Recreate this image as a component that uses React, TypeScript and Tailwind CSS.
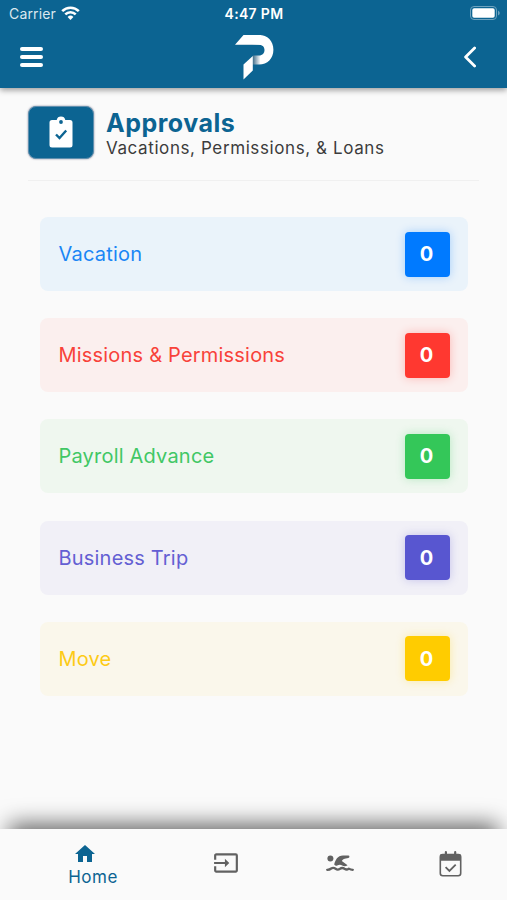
import { MdHome, MdInput } from "react-icons/md";

interface ApprovalItem {
  label: string;
  count: number;
  card: string;
  badge: string;
}

const items: ApprovalItem[] = [
  {
    label: "Vacation",
    count: 0,
    card: "bg-[#eaf3fa] text-[#1a86f5]",
    badge: "bg-[#007aff] shadow-[0_0_10px_rgba(0,122,255,0.3)]",
  },
  {
    label: "Missions & Permissions",
    count: 0,
    card: "bg-[#fbefee] text-[#f8423a]",
    badge: "bg-[#ff3830] shadow-[0_0_10px_rgba(255,56,48,0.3)]",
  },
  {
    label: "Payroll Advance",
    count: 0,
    card: "bg-[#eff7ef] text-[#41c765]",
    badge: "bg-[#34c759] shadow-[0_0_10px_rgba(52,199,89,0.3)]",
  },
  {
    label: "Business Trip",
    count: 0,
    card: "bg-[#f1f0f7] text-[#645fd3]",
    badge: "bg-[#5856d0] shadow-[0_0_10px_rgba(88,86,208,0.3)]",
  },
  {
    label: "Move",
    count: 0,
    card: "bg-[#faf7eb] text-[#fdcb16]",
    badge: "bg-[#ffcc00] shadow-[0_0_10px_rgba(255,204,0,0.3)]",
  },
];

export default function App() {
  return (
    <div className="flex h-[900px] w-[507px] flex-col overflow-hidden bg-[#fafafa] font-['Inter','Liberation_Sans',sans-serif]">
      <Header />

      <main className="flex-1 px-7">
        {/* Page title */}
        <div className="flex h-[93px] items-start border-b border-[#f0f0f0] pt-[18px]">
          <div className="flex h-[53px] w-[66px] items-center justify-center rounded-lg border border-[#5f8fae] bg-[#0c6492] pb-0.5 shadow-[0_0_2px_rgba(40,50,90,0.6)]">
            <ClipboardIcon />
          </div>
          <div className="ml-3 pt-[2px]">
            <h1 className="text-[25px] leading-[30px] font-bold tracking-[0.5px] text-[#0c6492]">
              Approvals
            </h1>
            <p className="text-[17px] leading-[20px] tracking-[0.6px] whitespace-nowrap text-[#3c3c3c]">
              Vacations, Permissions, &amp; Loans
            </p>
          </div>
        </div>

        {/* Approval types */}
        <div className="mt-9 flex flex-col gap-[27.2px] pr-[11px] pl-3">
          {items.map((item) => (
            <ApprovalCard key={item.label} item={item} />
          ))}
        </div>
      </main>

      <BottomNav />
    </div>
  );
}

function Header() {
  return (
    <header className="relative z-10 h-[88px] bg-[#0c6492] text-white shadow-[0_2px_6px_rgba(0,0,0,0.4)]">
      {/* Status bar */}
      <div className="grid h-[26px] grid-cols-3 items-center pr-[7px] pl-[9px]">
        <div className="flex items-center gap-[5px] text-[14px] tracking-[0.15px] text-[#dbe8ef]">
          Carrier
          <WifiIcon />
        </div>
        <div className="pr-px text-center text-[14px] font-semibold tracking-[0.3px]">4:47 PM</div>
        <div className="flex justify-end">
          <BatteryIcon />
        </div>
      </div>

      {/* App bar */}
      <div className="grid h-[62px] grid-cols-3 items-center pr-[31px] pl-5">
        <button className="flex w-[23px] flex-col gap-1">
          <span className="h-1 rounded-full bg-white" />
          <span className="h-1 rounded-full bg-white" />
          <span className="h-1 rounded-full bg-white" />
        </button>
        <div className="flex justify-center pl-3">
          <Logo />
        </div>
        <button className="flex justify-end">
          <svg width="13" height="22" viewBox="0 0 13 22" fill="none">
            <path d="M11.6 2L2.6 11L11.6 20" stroke="white" strokeWidth="2.8" strokeLinecap="round" strokeLinejoin="round" />
          </svg>
        </button>
      </div>
    </header>
  );
}

function ApprovalCard({ item }: { item: ApprovalItem }) {
  return (
    <div className={`flex h-[74px] items-center justify-between rounded-lg pr-[18px] pl-[18.5px] ${item.card}`}>
      <span className="text-[20px] tracking-[0.2px]">{item.label}</span>
      <span className={`flex h-[45px] w-[45px] items-center justify-center rounded pr-0.5 text-[20px] font-bold text-white ${item.badge}`}>
        {item.count}
      </span>
    </div>
  );
}

function BottomNav() {
  return (
    <nav className="flex h-[71px] items-center bg-[#fafafa] text-[#616161] shadow-[0_-14px_22px_-9px_rgba(0,0,0,0.6)]">
      <button className="flex w-[186px] flex-col items-center text-[#0c6492]">
        <MdHome size={24} className="mr-4" />
        <span className="text-[17px] leading-[22px] tracking-[0.5px]">Home</span>
      </button>
      <button className="flex w-[80px] justify-center pb-[3px]">
        <MdInput size={26} />
      </button>
      <button className="flex w-[148px] justify-center pb-[3px]">
        <SwimmerIcon />
      </button>
      <button className="flex w-[72px] justify-center pb-0.5">
        <CalendarCheckIcon />
      </button>
    </nav>
  );
}

function Logo() {
  return (
    <svg width="39" height="45" viewBox="0 0 39 45">
      <defs>
        <linearGradient id="fold" x1="17" y1="0" x2="25.5" y2="0" gradientUnits="userSpaceOnUse">
          <stop offset="0" stopColor="#2e5f7e" />
          <stop offset="1" stopColor="#ffffff" />
        </linearGradient>
      </defs>
      <path d="M8.5 0H24C32.5 0 38.4 6 38.4 14.7C38.4 23.5 32.5 29.5 24 29.5H17.8V20.5H24C27.5 20.5 29.5 18 29.5 15C29.5 12 27.5 9.7 24 9.7H0Z" fill="url(#fold)" />
      <path d="M8.5 0H26V9.9L24 9.7H0Z" fill="white" />
      <path d="M8.5 29.5L17.8 21V35.5L8.5 44.5Z" fill="white" />
    </svg>
  );
}

function ClipboardIcon() {
  return (
    <svg width="24" height="32" viewBox="0 0 24 32">
      <path d="M3 4H7.7A4.4 4.4 0 0 1 16.3 4H21Q23.5 4 23.5 6.5V29Q23.5 31.5 21 31.5H3Q0.5 31.5 0.5 29V6.5Q0.5 4 3 4Z" fill="white" />
      <circle cx="12" cy="6" r="1.9" fill="#0c6492" />
      <path d="M7 18.5L10.5 22L17.2 14.5" fill="none" stroke="#0c6492" strokeWidth="2.4" />
    </svg>
  );
}

function SwimmerIcon() {
  return (
    <svg width="28" height="18" viewBox="0 0 28 18">
      <circle cx="4.4" cy="4.6" r="3" fill="currentColor" />
      <path d="M22.3 1.6H17C11.5 1.6 9.4 6 8.2 10.6Q9.2 12.4 11.2 11.4Q14 10 16.2 11.4Q18.600 13 21.6 11.2L15.8 7.100Q16.600 4.500 22.3 3.900A1.150 1.150 0 0 0 22.3 1.6Z" fill="currentColor" />
      <path d="M1.200 15.800Q3.600 15.800 5.200 14.500Q7.400 13.200 9.600 14.800Q11.700 16.300 14 14.800Q16.300 13.200 18.500 14.800Q20.700 16.300 22.800 14.600Q24.700 15.800 26.800 15.800" fill="none" stroke="currentColor" strokeWidth="2.300" strokeLinecap="round" strokeLinejoin="round" />
    </svg>
  );
}

function CalendarCheckIcon() {
  return (
    <svg width="23" height="26" viewBox="0 0 23 26" fill="none" stroke="currentColor">
      <rect x="1.300" y="3.500" width="20.400" height="21.300" rx="2.500" strokeWidth="1.600" />
      <path d="M1 9.700V5Q1 3 3 3H20Q22 3 22 5V9.700Z" fill="currentColor" stroke="none" />
      <path d="M6.900 1.200V4M16.200 1.200V4" strokeWidth="2.200" strokeLinecap="round" />
      <path d="M6.600 16.200L10.400 20L16.700 13.600" strokeWidth="1.800" />
    </svg>
  );
}

function WifiIcon() {
  return (
    <svg width="19" height="14" viewBox="0 0 19 14" fill="none" stroke="white" strokeWidth="2.6">
      <path d="M1.2 5.2A11.8 11.8 0 0 1 17.8 5.2" />
      <path d="M4.3 8.4A7.4 7.4 0 0 1 14.7 8.4" />
      <path d="M9.5 14L6.6 11A4.1 4.1 0 0 1 12.4 11Z" fill="white" stroke="none" />
    </svg>
  );
}

function BatteryIcon() {
  return (
    <svg width="30" height="14" viewBox="0 0 30 14">
      <rect x="0.5" y="0.5" width="26" height="13" rx="3.5" fill="none" stroke="#6da2be" />
      <rect x="2.3" y="2.3" width="22.4" height="9.4" rx="1.8" fill="white" />
      <path d="M28 4.5Q29.8 5.5 29.8 7Q29.8 8.5 28 9.5Z" fill="#6da2be" />
    </svg>
  );
}
